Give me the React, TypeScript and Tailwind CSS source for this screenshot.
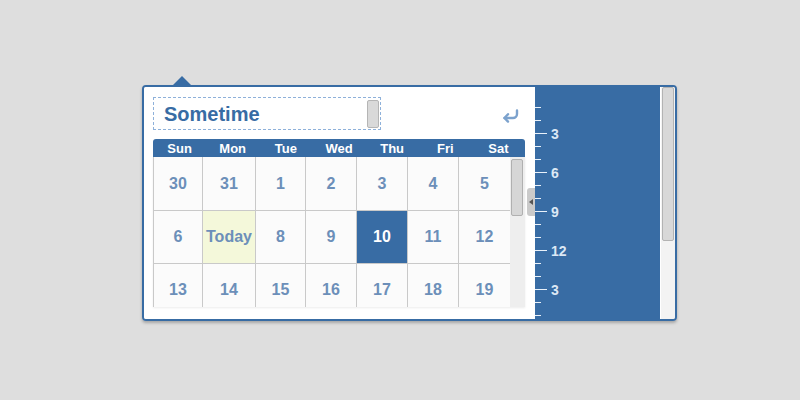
import React from 'react';

export default function App() {
  const days = ['Sun', 'Mon', 'Tue', 'Wed', 'Thu', 'Fri', 'Sat'];
  const rows: (number | string)[][] = [
    [30, 31, 1, 2, 3, 4, 5],
    [6, 'Today', 8, 9, 10, 11, 12],
    [13, 14, 15, 16, 17, 18, 19],
  ];
  const ticks = Array.from({ length: 17 }, (_, i) => i);
  const labels: Record<number, string> = { 2: '3', 5: '6', 8: '9', 11: '12', 14: '3' };

  return (
    <div className="w-[800px] h-[400px] bg-[#dedede] pt-[85px] pl-[142px] font-['Liberation_Sans',Arial,sans-serif]">
      <div className="relative w-[535px] h-[236px] border-2 border-[#386ca4] rounded-[4px] flex shadow-[0_2px_3px_rgba(0,0,0,0.25)]">
        {/* pointer */}
        <div className="absolute -top-[11px] left-[29px] w-0 h-0 border-l-[9px] border-r-[9px] border-b-[9px] border-l-transparent border-r-transparent border-b-[#386ca4]" />

        {/* left white area */}
        <div className="w-[391px] h-full bg-white flex flex-col pl-[9px] pt-[10px] rounded-l-[2px]">
          <div className="flex w-[372px]">
            <div className="w-[228px] h-[33px] border border-dashed border-[#8eb1da] flex items-center justify-between pl-[10px] pr-[1px]">
              <span className="text-[20px] font-bold text-[#386ca4] leading-none">Sometime</span>
              <div className="w-[12px] h-[28px] bg-[#d9d9d9] border border-[#b5b5b5] rounded-[2px]" />
            </div>
            <div className="ml-auto mr-[6px] mt-[12px]">
              <svg width="17" height="14" viewBox="0 0 17 14" fill="none" stroke="#7ca2cd" strokeWidth="2.4" strokeLinecap="round" strokeLinejoin="round">
                <path d="M15 1.5 V5 a4 4 0 0 1 -4 4 H2.5" />
                <path d="M6 5.2 L2.5 9 L6 12.6" />
              </svg>
            </div>
          </div>

          <div className="mt-[9px] w-[372px] h-[18px] bg-[#386ca4] rounded-t-[3px] grid grid-cols-7 items-center text-white text-[13px] font-bold">
            {days.map((d) => (
              <div key={d} className="text-center leading-none">{d}</div>
            ))}
          </div>

          <div className="w-[372px] h-[150px] flex bg-[#eeeeee] overflow-hidden shadow-[0_1px_2px_rgba(0,0,0,0.08)]">
            <div className="w-[357px] grid grid-cols-[49px_53px_50px_51px_51px_51px_52px] grid-rows-[54px_53px_53px] border-l border-[#c9c9c9]">
              {rows.flat().map((v, i) => {
                const today = v === 'Today';
                const sel = v === 10;
                return (
                  <div
                    key={i}
                    className={`flex items-center justify-center border-r border-b border-[#c9c9c9] text-[16px] font-bold ${
                      today ? 'bg-[#f4f8da] text-[#6c8fb9]' : sel ? 'bg-[#386ca4] text-white' : 'bg-[#fbfbfb] text-[#6c8fb9]'
                    }`}
                  >
                    {v}
                  </div>
                );
              })}
            </div>
            <div className="w-[15px] h-full bg-[#eeeeee] pl-[1px] pt-[2px]">
              <div className="w-[12px] h-[57px] bg-[#d6d6d6] border border-[#b0b0b0] rounded-[2px]" />
            </div>
          </div>
        </div>

        {/* small tab */}
        <div className="absolute left-[383px] top-[101px] w-[8px] h-[28px] bg-[#cacaca] rounded-l-[3px] flex items-center justify-center">
          <div className="w-0 h-0 border-t-[3px] border-b-[3px] border-r-[4px] border-t-transparent border-b-transparent border-r-[#555]" />
        </div>

        {/* ruler */}
        <div className="w-[125px] h-full bg-[#386ca4] pt-[14px] flex flex-col">
          {ticks.map((t) => {
            const major = labels[t] !== undefined;
            return (
              <div key={t} className="h-[13px] flex items-center shrink-0">
                <div className={`h-[1.5px] bg-[#e9f1fa] ${major ? 'w-[12px]' : 'w-[6px]'}`} />
                {major && (
                  <span className="ml-[4px] text-[14px] font-bold text-[#dce8f5] leading-none">{labels[t]}</span>
                )}
              </div>
            );
          })}
        </div>

        {/* right scroll column */}
        <div className="w-[15px] h-full bg-[#f3f3f3] border-l border-[#ffffff] pl-[1px] rounded-r-[2px]">
          <div className="w-[12px] h-[154px] bg-[#d8d8d8] border border-[#b3b3b3] rounded-[2px]" />
        </div>
      </div>
    </div>
  );
}
